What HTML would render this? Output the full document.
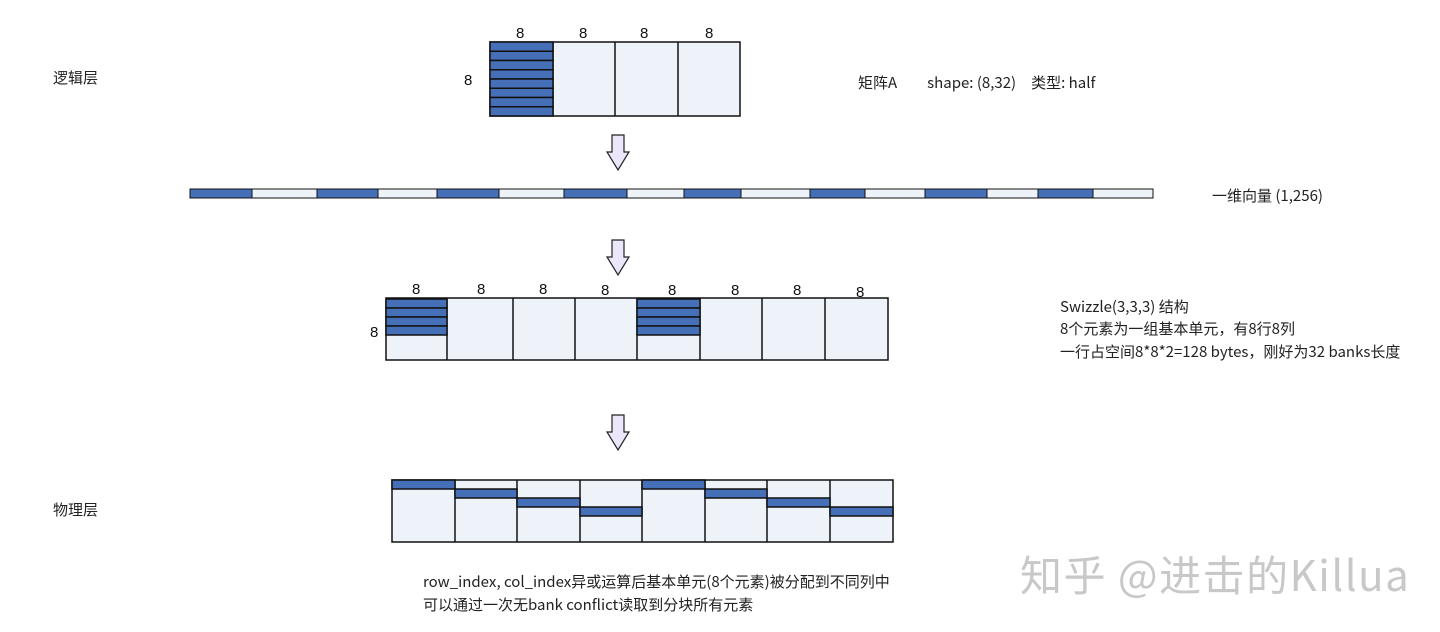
<!DOCTYPE html>
<html><head><meta charset="utf-8"><style>
html,body{margin:0;padding:0;background:#fff;width:1440px;height:632px;overflow:hidden}
svg{display:block}
text{font-family:"Liberation Sans","Noto Sans CJK SC",sans-serif;fill:#222}
.c{font-family:"Noto Sans CJK SC","Liberation Sans",sans-serif;font-size:15px;fill:#222}
.n{font-family:"Liberation Sans",sans-serif;font-size:15px;fill:#111}
</style></head><body>
<svg width="1440" height="632" viewBox="0 0 1440 632">
<g stroke="#111" stroke-width="1.5">
<rect x="490" y="42" width="250" height="74" fill="#eef3fa"/>
<line x1="553" y1="42" x2="553" y2="116"/><line x1="615" y1="42" x2="615" y2="116"/><line x1="678" y1="42" x2="678" y2="116"/>
<rect x="490" y="42" width="63" height="9.25" fill="#4570b8"/>
<rect x="490" y="51.25" width="63" height="9.25" fill="#4570b8"/>
<rect x="490" y="60.5" width="63" height="9.25" fill="#4570b8"/>
<rect x="490" y="69.75" width="63" height="9.25" fill="#4570b8"/>
<rect x="490" y="79" width="63" height="9.25" fill="#4570b8"/>
<rect x="490" y="88.25" width="63" height="9.25" fill="#4570b8"/>
<rect x="490" y="97.5" width="63" height="9.25" fill="#4570b8"/>
<rect x="490" y="106.75" width="63" height="9.25" fill="#4570b8"/>
</g>
<g><text x="516" y="38" class="n">8</text><text x="579" y="38" class="n">8</text><text x="640" y="38" class="n">8</text><text x="705" y="38" class="n">8</text><text x="464" y="85" class="n">8</text></g>
<text x="858" y="88" class="c">矩阵A　　shape: (8,32)　类型: half</text>

<g stroke="#111" stroke-width="1">
<rect x="190" y="189" width="963" height="9" fill="#eef3fa"/>
<rect x="190" y="189" width="62" height="9" fill="#4570b8"/>
<rect x="317" y="189" width="61" height="9" fill="#4570b8"/>
<rect x="437" y="189" width="62" height="9" fill="#4570b8"/>
<rect x="564" y="189" width="63" height="9" fill="#4570b8"/>
<rect x="684" y="189" width="57" height="9" fill="#4570b8"/>
<rect x="810" y="189" width="55" height="9" fill="#4570b8"/>
<rect x="925" y="189" width="62" height="9" fill="#4570b8"/>
<rect x="1038" y="189" width="55" height="9" fill="#4570b8"/>
</g>
<text x="1212" y="201" class="c">一维向量 (1,256)</text>

<g fill="#ebe6fa" stroke="#222" stroke-width="1.2">
<path d="M612,135 H624 V152 H629 L618,170 L607,152 H612 Z"/>
<path d="M612,240 H624 V257 H629 L618,275 L607,257 H612 Z"/>
<path d="M612,415 H624 V432 H629 L618,450 L607,432 H612 Z"/>
</g>

<g stroke="#111" stroke-width="1.5">
<rect x="386" y="298" width="502" height="62" fill="#eef3fa"/>
<line x1="447" y1="298" x2="447" y2="360"/><line x1="513" y1="298" x2="513" y2="360"/><line x1="575" y1="298" x2="575" y2="360"/><line x1="637" y1="298" x2="637" y2="360"/><line x1="700" y1="298" x2="700" y2="360"/><line x1="762" y1="298" x2="762" y2="360"/><line x1="825" y1="298" x2="825" y2="360"/>
<rect x="386" y="299" width="61" height="9" fill="#4570b8"/><rect x="386" y="308" width="61" height="9" fill="#4570b8"/><rect x="386" y="317" width="61" height="9" fill="#4570b8"/><rect x="386" y="326" width="61" height="9" fill="#4570b8"/>
<rect x="637" y="299" width="63" height="9" fill="#4570b8"/><rect x="637" y="308" width="63" height="9" fill="#4570b8"/><rect x="637" y="317" width="63" height="9" fill="#4570b8"/><rect x="637" y="326" width="63" height="9" fill="#4570b8"/>
</g>
<g><text x="412" y="294" class="n">8</text><text x="477" y="294" class="n">8</text><text x="539" y="294" class="n">8</text><text x="601" y="295" class="n">8</text><text x="668" y="295" class="n">8</text><text x="731" y="295" class="n">8</text><text x="793" y="295" class="n">8</text><text x="856" y="297" class="n">8</text><text x="370" y="337" class="n">8</text></g>
<text x="1060" y="312" class="c">Swizzle(3,3,3) 结构</text>
<text x="1060" y="334" class="c">8个元素为一组基本单元，有8行8列</text>
<text x="1060" y="357" class="c">一行占空间8*8*2=128 bytes，刚好为32 banks长度</text>

<g stroke="#111" stroke-width="1.5">
<rect x="392" y="480" width="501" height="62" fill="#eef3fa"/>
<line x1="455" y1="480" x2="455" y2="542"/><line x1="517" y1="480" x2="517" y2="542"/><line x1="580" y1="480" x2="580" y2="542"/><line x1="642" y1="480" x2="642" y2="542"/><line x1="705" y1="480" x2="705" y2="542"/><line x1="767" y1="480" x2="767" y2="542"/><line x1="830" y1="480" x2="830" y2="542"/>
<rect x="392" y="480" width="63" height="9" fill="#4570b8"/>
<rect x="455" y="489" width="62" height="9" fill="#4570b8"/>
<rect x="517" y="498" width="63" height="9" fill="#4570b8"/>
<rect x="580" y="507" width="62" height="9" fill="#4570b8"/>
<rect x="642" y="480" width="63" height="9" fill="#4570b8"/>
<rect x="705" y="489" width="62" height="9" fill="#4570b8"/>
<rect x="767" y="498" width="63" height="9" fill="#4570b8"/>
<rect x="830" y="507" width="63" height="9" fill="#4570b8"/>
</g>

<text x="53" y="83" class="c">逻辑层</text>
<text x="53" y="515" class="c">物理层</text>
<text x="423" y="587" class="c">row_index, col_index异或运算后基本单元(8个元素)被分配到不同列中</text>
<text x="423" y="610" class="c">可以通过一次无bank conflict读取到分块所有元素</text>

<text x="1020" y="591" style="font-family:'Noto Sans CJK SC','Liberation Sans',sans-serif;font-size:42px;letter-spacing:1.5px;fill:#c8c8c8">知乎 @进击的Killua</text>
</svg>
</body></html>
